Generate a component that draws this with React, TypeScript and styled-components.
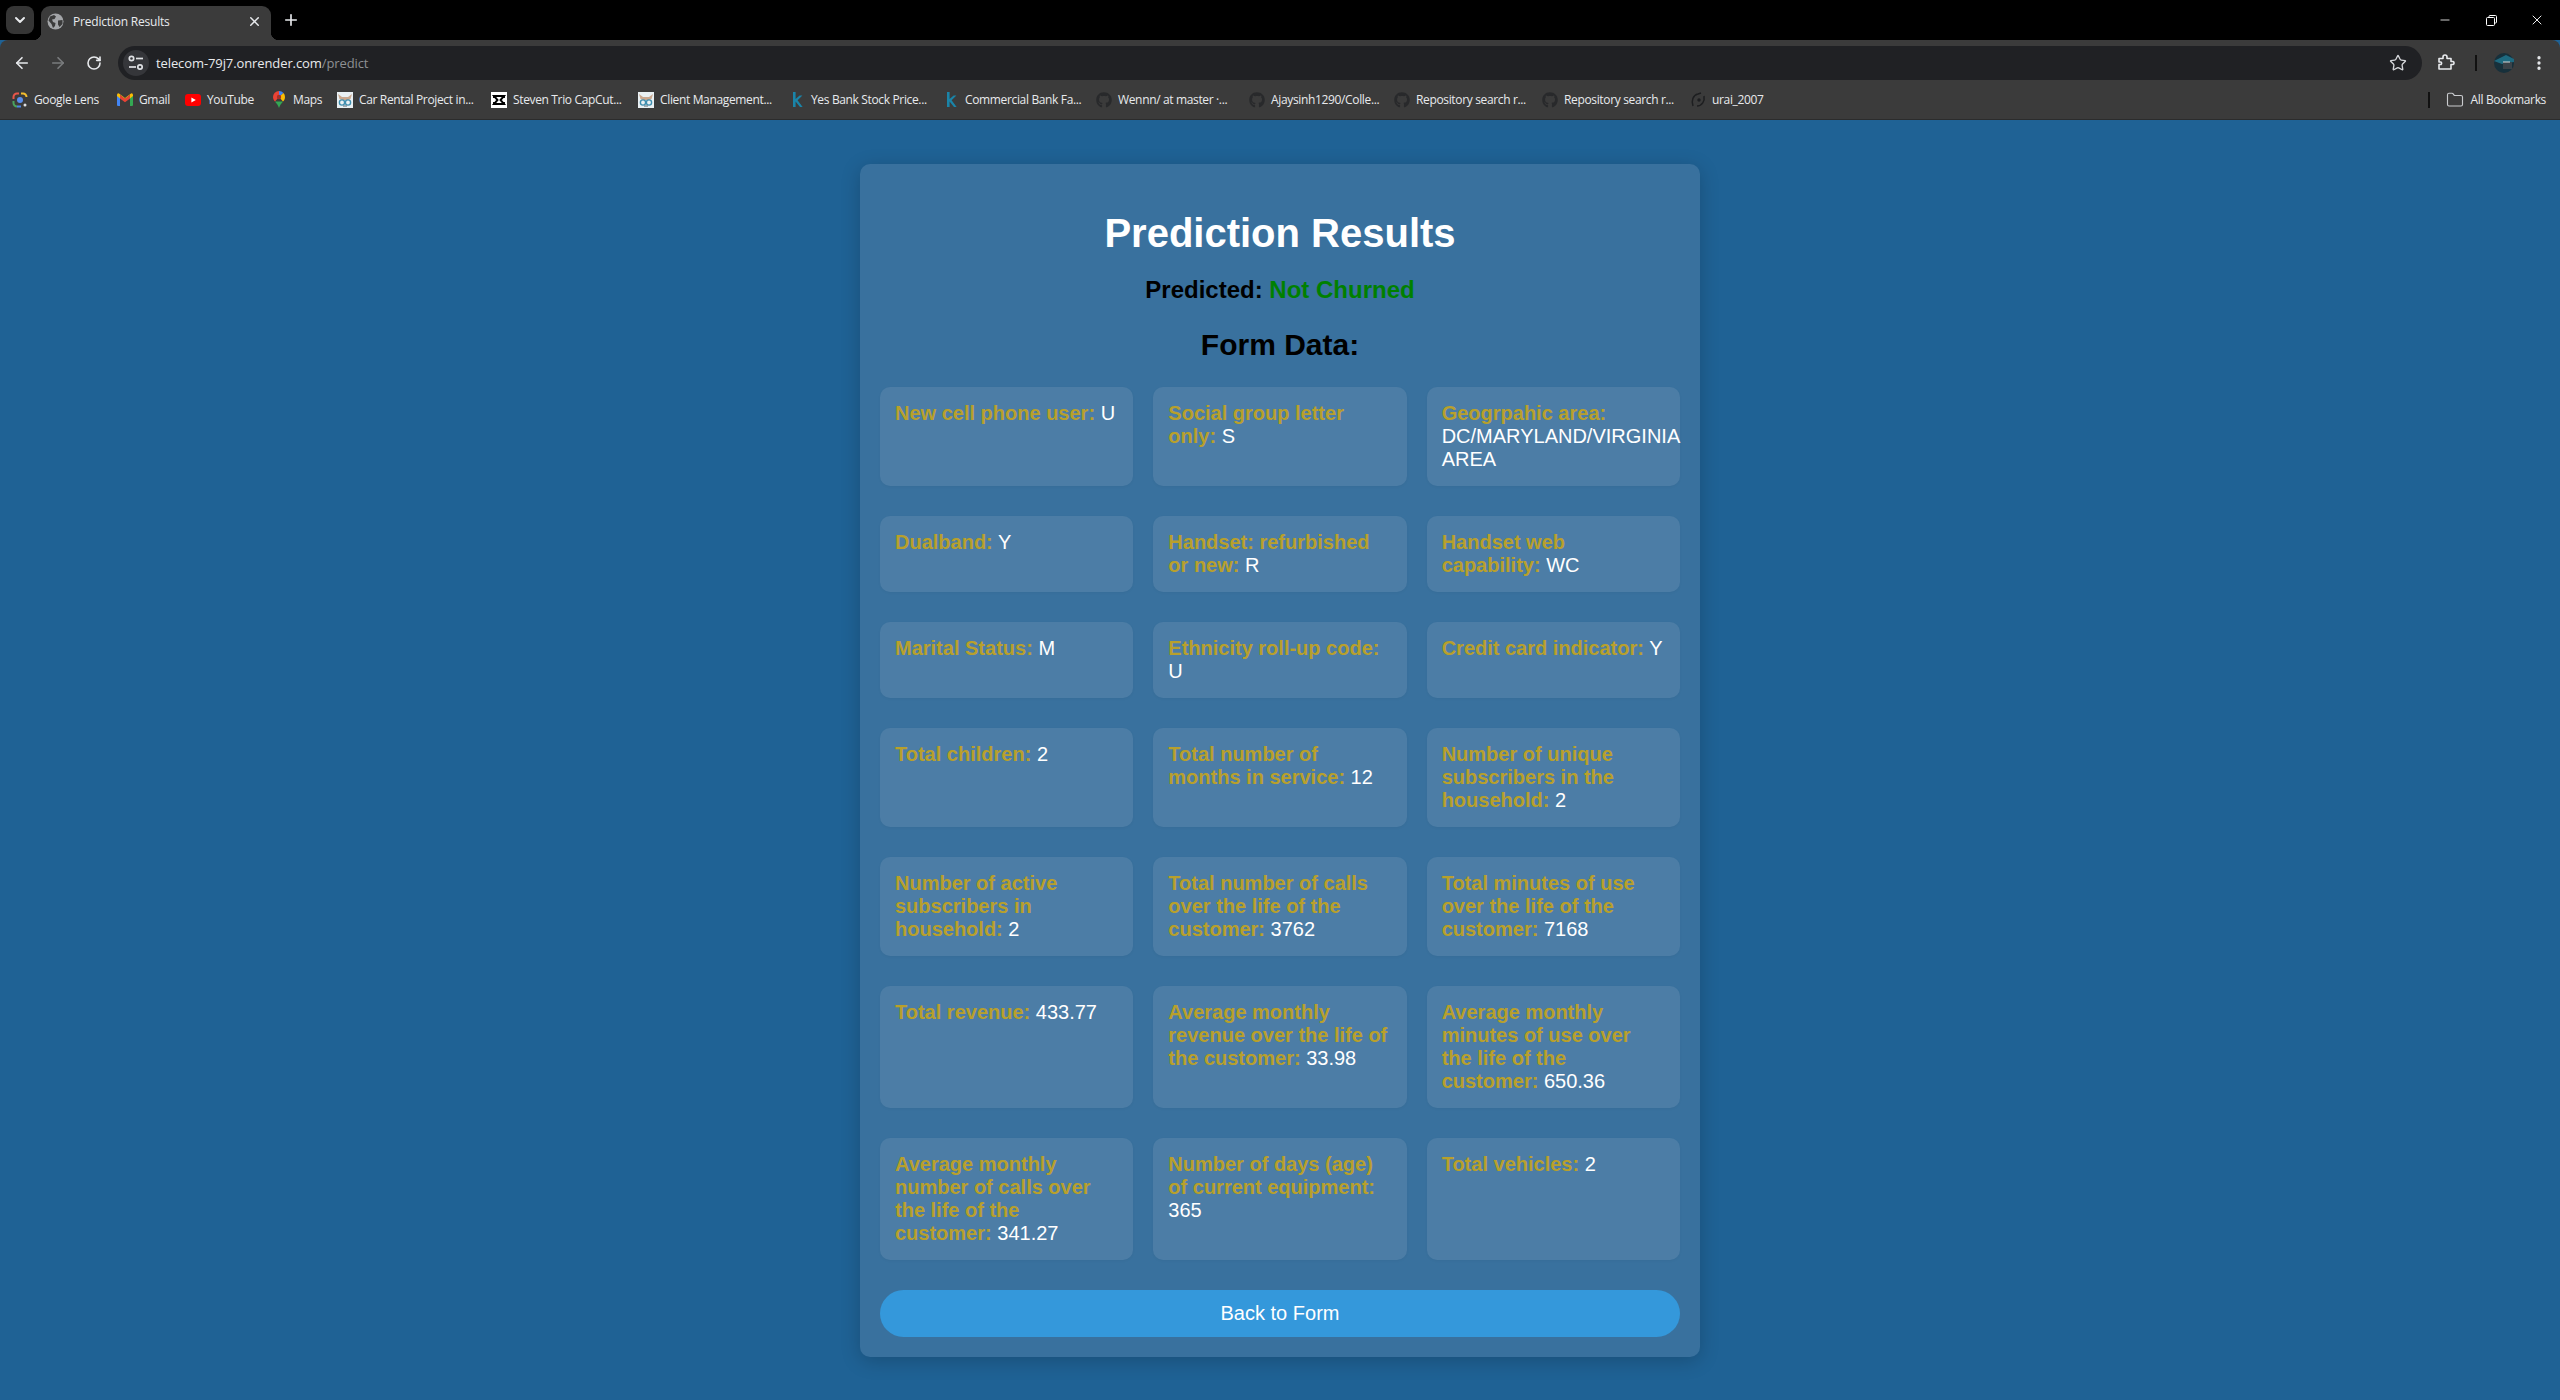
import styled, {createGlobalStyle} from "styled-components";
import {ArrowLeft, ArrowRight, ChevronDown, EllipsisVertical, Folder, Minus, Plus, RotateCw, Star, X} from "lucide-react";
import {FaGithub} from "react-icons/fa";
import type {ReactNode} from "react";

const GlobalStyle = createGlobalStyle`
    html, body {
        margin: 0;
        padding: 0;
        height: 100%;
        overflow: hidden;
        background: #1f6295;
    }
    * {
        box-sizing: border-box;
    }
`

const uiFont = `"Open Sans", "Noto Sans", sans-serif`
const pageFont = `"Liberation Sans", Arial, sans-serif`

type FormItem = { label: string, value: string }

const formRows: FormItem[][] = [
    [
        {label: "New cell phone user:", value: "U"},
        {label: "Social group letter only:", value: "S"},
        {label: "Geogrpahic area:", value: "DC/MARYLAND/VIRGINIA AREA"},
    ],
    [
        {label: "Dualband:", value: "Y"},
        {label: "Handset: refurbished or new:", value: "R"},
        {label: "Handset web capability:", value: "WC"},
    ],
    [
        {label: "Marital Status:", value: "M"},
        {label: "Ethnicity roll-up code:", value: "U"},
        {label: "Credit card indicator:", value: "Y"},
    ],
    [
        {label: "Total children:", value: "2"},
        {label: "Total number of months in service:", value: "12"},
        {label: "Number of unique subscribers in the household:", value: "2"},
    ],
    [
        {label: "Number of active subscribers in household:", value: "2"},
        {label: "Total number of calls over the life of the customer:", value: "3762"},
        {label: "Total minutes of use over the life of the customer:", value: "7168"},
    ],
    [
        {label: "Total revenue:", value: "433.77"},
        {label: "Average monthly revenue over the life of the customer:", value: "33.98"},
        {label: "Average monthly minutes of use over the life of the customer:", value: "650.36"},
    ],
    [
        {label: "Average monthly number of calls over the life of the customer:", value: "341.27"},
        {label: "Number of days (age) of current equipment:", value: "365"},
        {label: "Total vehicles:", value: "2"},
    ],
]

const GlobeIcon = () => <svg width="17" height="17" viewBox="0 0 17 17">
    <circle cx="8.5" cy="8.5" r="8" fill="#a3a5a8"/>
    <path d="M3 3.5 L7 2 L9 3.5 L7.5 6 L5 6.5 L6 9 L8.5 10 L8 13 L6 15 L4.5 11 L1.5 7.5 Z M11 7.5 L15.5 7 L15.5 11 L12.5 14 L11 11.5 Z" fill="#3b3b3b"/>
</svg>

const TuneIcon = () => <svg width="18" height="18" viewBox="0 0 18 18" fill="none" stroke="#dfe1e4" strokeWidth="1.7">
    <circle cx="4.5" cy="4.5" r="2.2"/>
    <path d="M9 4.5 H16"/>
    <path d="M2 13 H9"/>
    <circle cx="13" cy="13" r="2.2"/>
</svg>

const LensIcon = () => <svg width="16" height="16" viewBox="0 0 16 16" fill="none" strokeWidth="2">
    <path d="M1.5 7 V5 A3.5 3.5 0 0 1 5 1.5 H7" stroke="#e8564a"/>
    <path d="M9 1.5 H11 A3.5 3.5 0 0 1 14.5 5" stroke="#f3bd2e"/>
    <path d="M1.5 9 V11 A3.5 3.5 0 0 0 5 14.5" stroke="#4aa35e"/>
    <path d="M5 14.5 H9" stroke="#4a86e8"/>
    <circle cx="8" cy="8" r="3" fill="#5a8fee" stroke="none"/>
    <circle cx="13" cy="13" r="1.5" fill="#dfe1e4" stroke="none"/>
</svg>

const GmailIcon = () => <svg width="16" height="13" viewBox="0 0 16 13">
    <path d="M0 2 L3 2 L3 13 L1 13 Q0 13 0 12 Z" fill="#4285f4"/>
    <path d="M13 2 L16 2 L16 12 Q16 13 15 13 L13 13 Z" fill="#34a853"/>
    <path d="M0 2 Q0 0 2 0.4 L8 5 L14 0.4 Q16 0 16 2 L16 3 L13 5.4 L13 2 L8 6 L3 2 L3 5.4 L0 3 Z" fill="#fbbc04"/>
    <path d="M3 2 L8 6 L13 2 L13 5.6 L8 9.2 L3 5.6 Z" fill="#ea4335"/>
</svg>

const YouTubeIcon = () => <svg width="16" height="12" viewBox="0 0 16 12">
    <rect width="16" height="12" rx="3" fill="#f00"/>
    <path d="M6.4 3.4 L10.8 6 L6.4 8.6 Z" fill="#fff"/>
</svg>

const MapsIcon = () => <svg width="12" height="17" viewBox="0 0 12 17">
    <path d="M6 0 A6 6 0 0 0 0 6 C0 8 1 9.5 2 10.6 L6 6 Z" fill="#ea4335"/>
    <path d="M6 0 A6 6 0 0 1 10.5 2 L6 6 Z" fill="#4285f4"/>
    <path d="M10.5 2 A6 6 0 0 1 12 6 C12 8 11 9.5 10 10.6 L6 6 Z" fill="#fbbc04"/>
    <path d="M2 10.6 L10 10.6 C8.5 12.6 7 14 6 17 C5 14 3.5 12.6 2 10.6 Z" fill="#34a853"/>
    <circle cx="6" cy="6" r="2.2" fill="#a3302a"/>
</svg>

const BullIcon = () => <svg width="16" height="16" viewBox="0 0 16 16">
    <rect width="16" height="16" fill="#e9f0f3"/>
    <path d="M1 2 L5 5 L11 5 L15 2 L13.5 7 L11 8 L5 8 L2.5 7 Z" fill="#c9a88f"/>
    <circle cx="5" cy="10.5" r="2.6" fill="none" stroke="#3f8fb0" strokeWidth="1.4"/>
    <circle cx="11" cy="10.5" r="2.6" fill="none" stroke="#3f8fb0" strokeWidth="1.4"/>
    <path d="M6 14 H10" stroke="#6b7f8a" strokeWidth="1.2"/>
</svg>

const CapcutIcon = () => <svg width="16" height="16" viewBox="0 0 16 16">
    <rect width="16" height="16" fill="#fff"/>
    <path d="M3 4 H13 L9.5 8 L13 12 H3 L6.5 8 Z" fill="none" stroke="#000" strokeWidth="1.9"/>
    <path d="M3 4 V6 M13 4 V6 M3 12 V10 M13 12 V10" stroke="#000" strokeWidth="1.9"/>
</svg>

const KaggleIcon = () => <svg width="16" height="17" viewBox="0 0 16 17">
    <path d="M4 1 H6.6 V8 L10.6 4.4 H13.4 L8.6 9.2 L13.6 16 H11 L6.6 10.4 V16 H4 Z" fill="#1a84a8"/>
</svg>

const GithubIcon = () => <FaGithub size={16} color="#28292b"/>

const SpiralIcon = () => <svg width="16" height="16" viewBox="0 0 16 16" fill="none" stroke="#1d1e20" strokeWidth="1.5">
    <path d="M3 14 C1 9 3 3 8 2 L11 1"/>
    <path d="M14 4 C15 9 12 14 7 14"/>
    <circle cx="9" cy="8" r="1" fill="#1d1e20"/>
</svg>

const ExtensionIcon = () => <svg width="17" height="18" viewBox="0 0 17 18" fill="none" stroke="#e8eaed" strokeWidth="1.6" strokeLinejoin="round">
    <path d="M1 4.5 H5 V3 A2 2 0 0 1 9 3 V4.5 H13 V7.5 H15 A1.6 1.6 0 0 1 15 10.5 H13 V15 H1 V10.5 H3 A1.6 1.6 0 0 0 3 8 H1 Z"/>
</svg>

const AvatarIcon = () => <svg width="20" height="20" viewBox="0 0 20 20">
    <circle cx="10" cy="10" r="10" fill="#17303b"/>
    <path d="M0 8 L12 2 L20 6 L20 9 L8 11 Z" fill="#1e6a80"/>
    <rect x="9" y="9" width="9" height="7" fill="#3a4248"/>
    <path d="M9 9 H16" stroke="#d5d8da" strokeWidth="1"/>
</svg>

const RestoreIcon = () => <svg width="11" height="11" viewBox="0 0 11 11" fill="none" stroke="#ffffff" strokeWidth="1">
    <rect x="0.5" y="2.5" width="8" height="8" rx="1"/>
    <path d="M3 2.5 V1.5 A1 1 0 0 1 4 0.5 H9.5 A1 1 0 0 1 10.5 1.5 V7 A1 1 0 0 1 9.5 8 H8.5"/>
</svg>

type BookmarkDef = { icon: ReactNode, title: string, width: number }

const bookmarks: BookmarkDef[] = [
    {icon: <LensIcon/>, title: "Google Lens", width: 105},
    {icon: <GmailIcon/>, title: "Gmail", width: 68},
    {icon: <YouTubeIcon/>, title: "YouTube", width: 86},
    {icon: <MapsIcon/>, title: "Maps", width: 66},
    {icon: <BullIcon/>, title: "Car Rental Project in...", width: 154},
    {icon: <CapcutIcon/>, title: "Steven Trio CapCut...", width: 147},
    {icon: <BullIcon/>, title: "Client Management...", width: 151},
    {icon: <KaggleIcon/>, title: "Yes Bank Stock Price...", width: 154},
    {icon: <KaggleIcon/>, title: "Commercial Bank Fa...", width: 153},
    {icon: <GithubIcon/>, title: "Wennn/ at master ·...", width: 153},
    {icon: <GithubIcon/>, title: "Ajaysinh1290/Colle...", width: 145},
    {icon: <GithubIcon/>, title: "Repository search r...", width: 148},
    {icon: <GithubIcon/>, title: "Repository search r...", width: 148},
    {icon: <SpiralIcon/>, title: "urai_2007", width: 90},
]

const App = () => {
    return <Screen>
        <GlobalStyle/>
        <TabStrip>
            <TabSearch><ChevronDown size={16} strokeWidth={3} color="#e8eaed"/></TabSearch>
            <Tab>
                <GlobeIcon/>
                <TabTitle>Prediction Results</TabTitle>
                <TabClose><X size={15} strokeWidth={2.4} color="#e8eaed"/></TabClose>
            </Tab>
            <NewTab><Plus size={18} strokeWidth={2.2} color="#e8eaed"/></NewTab>
            <WindowControls>
                <WindowButton><Minus size={14} strokeWidth={1.4} color="#ffffff"/></WindowButton>
                <WindowButton><RestoreIcon/></WindowButton>
                <WindowButton><X size={16} strokeWidth={1.4} color="#ffffff"/></WindowButton>
            </WindowControls>
        </TabStrip>
        <Toolbar>
            <NavButton><ArrowLeft size={18} strokeWidth={2.2} color="#e8eaed"/></NavButton>
            <NavButton><ArrowRight size={18} strokeWidth={2.2} color="#7a7c7e"/></NavButton>
            <NavButton><RotateCw size={16} strokeWidth={2.4} color="#e8eaed"/></NavButton>
            <AddressBar>
                <SiteInfo><TuneIcon/></SiteInfo>
                <UrlText>telecom-79j7.onrender.com<UrlPath>/predict</UrlPath></UrlText>
                <Star size={18} strokeWidth={1.8} color="#d5d7da"/>
            </AddressBar>
            <ToolbarEnd>
                <ExtensionIcon/>
                <ToolbarDivider/>
                <AvatarIcon/>
                <EllipsisVertical size={18} strokeWidth={2.4} color="#e8eaed"/>
            </ToolbarEnd>
        </Toolbar>
        <BookmarksBar>
            {bookmarks.map((bookmark, index) =>
                <Bookmark key={index} $width={bookmark.width}>
                    <BookmarkIcon>{bookmark.icon}</BookmarkIcon>
                    <BookmarkTitle>{bookmark.title}</BookmarkTitle>
                </Bookmark>
            )}
            <AllBookmarks>
                <BarDivider/>
                <Folder size={18} strokeWidth={1.5} color="#c9cbce"/>
                <BookmarkTitle>All Bookmarks</BookmarkTitle>
            </AllBookmarks>
        </BookmarksBar>
        <Page>
            <Container>
                <Title>Prediction Results</Title>
                <Predicted>Predicted: <NotChurned>Not Churned</NotChurned></Predicted>
                <SubTitle>Form Data:</SubTitle>
                <FormGrid>
                    {formRows.flat().map(item =>
                        <FormCell key={item.label}>
                            <CellLabel>{item.label}</CellLabel> {item.value}
                        </FormCell>
                    )}
                </FormGrid>
                <BackButton>Back to Form</BackButton>
            </Container>
        </Page>
    </Screen>
}

const Screen = styled.div`
    width: 2560px;
    height: 1400px;
    display: flex;
    flex-direction: column;
    overflow: hidden;
`

const TabStrip = styled.div`
    height: 40px;
    flex-shrink: 0;
    background: #000;
    display: flex;
    align-items: flex-end;
    padding-left: 6px;
`

const TabSearch = styled.div`
    width: 28px;
    height: 28px;
    margin-bottom: 6px;
    border-radius: 8px;
    background: #353535;
    display: flex;
    align-items: center;
    justify-content: center;
`

const Tab = styled.div`
    position: relative;
    width: 230px;
    height: 34px;
    margin-left: 7px;
    padding: 0 9px 4px 6px;
    border-radius: 9px 9px 0 0;
    background: #3b3b3b;
    display: flex;
    align-items: center;
    gap: 9px;

    &::before, &::after {
        content: "";
        position: absolute;
        bottom: 0;
        width: 8px;
        height: 8px;
    }
    &::before {
        left: -8px;
        background: radial-gradient(circle at 0 0, #000 8px, #3b3b3b 8.5px);
    }
    &::after {
        right: -8px;
        background: radial-gradient(circle at 100% 0, #000 8px, #3b3b3b 8.5px);
    }
`

const TabTitle = styled.span`
    flex: 1;
    font: 12px ${uiFont};
    color: #e8eaed;
    letter-spacing: -0.2px;
`

const TabClose = styled.span`
    display: flex;
`

const NewTab = styled.div`
    width: 28px;
    height: 28px;
    margin: 0 0 6px 6px;
    display: flex;
    align-items: center;
    justify-content: center;
`

const WindowControls = styled.div`
    margin-left: auto;
    height: 40px;
    display: flex;
    align-items: center;
`

const WindowButton = styled.div`
    width: 46px;
    height: 40px;
    display: flex;
    align-items: center;
    justify-content: center;
`

const Toolbar = styled.div`
    height: 40px;
    flex-shrink: 0;
    background: #3b3b3b;
    border-radius: 8px 8px 0 0;
    display: flex;
    align-items: center;
    padding: 6px 12px 0 4px;
`

const NavButton = styled.div`
    width: 36px;
    height: 34px;
    display: flex;
    align-items: center;
    justify-content: center;
`

const AddressBar = styled.div`
    width: 2304px;
    height: 34px;
    margin-left: 6px;
    border-radius: 17px;
    background: #202124;
    display: flex;
    align-items: center;
    padding: 0 15px 0 5px;
`

const SiteInfo = styled.div`
    width: 26px;
    height: 26px;
    border-radius: 13px;
    background: #35363a;
    display: flex;
    align-items: center;
    justify-content: center;
`

const UrlText = styled.span`
    flex: 1;
    margin-left: 7px;
    font: 13px ${uiFont};
    color: #e8eaed;
    letter-spacing: -0.1px;
`

const UrlPath = styled.span`
    color: #8e9093;
`

const ToolbarEnd = styled.div`
    flex: 1;
    display: flex;
    align-items: center;
    justify-content: space-between;
    padding-left: 16px;
`

const ToolbarDivider = styled.div`
    width: 2px;
    height: 16px;
    background: #111;
    margin: 0 0 0 4px;
`

const BookmarksBar = styled.div`
    height: 40px;
    flex-shrink: 0;
    background: #3b3b3b;
    display: flex;
    align-items: center;
    padding-left: 12px;
    border-bottom: 1px solid #2c2c2c;
`

const Bookmark = styled.div<{ $width: number }>`
    width: ${props => props.$width}px;
    flex-shrink: 0;
    display: flex;
    align-items: center;
    gap: 6px;
    white-space: nowrap;
    overflow: hidden;
`

const BookmarkIcon = styled.span`
    width: 16px;
    display: flex;
    align-items: center;
    justify-content: center;
`

const BookmarkTitle = styled.span`
    font: 12px ${uiFont};
    color: #e8eaed;
    letter-spacing: -0.35px;
`

const AllBookmarks = styled.div`
    margin-left: auto;
    padding-right: 14px;
    display: flex;
    align-items: center;
    gap: 7px;
`

const BarDivider = styled.div`
    width: 2px;
    height: 16px;
    background: #111;
    margin-right: 9px;
`

const Page = styled.main`
    flex: 1;
    background: #1f6295;
    padding-top: 44px;
    display: flex;
    justify-content: center;
    align-items: flex-start;
    font-family: ${pageFont};
`

const Container = styled.div`
    width: 840px;
    padding: 20px;
    border-radius: 10px;
    background: #39719e;
    box-shadow: 0 4px 20px rgba(0, 0, 0, 0.2);
    display: flex;
    flex-direction: column;
`

const Title = styled.h1`
    margin: 27px 0 20px;
    font-size: 40px;
    font-weight: bold;
    color: #fff;
    text-align: center;
`

const Predicted = styled.p`
    margin: 0 0 24px;
    font-size: 24px;
    font-weight: bold;
    color: #000;
    text-align: center;
`

const NotChurned = styled.span`
    color: #008000;
`

const SubTitle = styled.h2`
    margin: 0 0 25px;
    font-size: 30px;
    font-weight: bold;
    color: #000;
    text-align: center;
`

const FormGrid = styled.div`
    display: grid;
    grid-template-columns: repeat(3, 1fr);
    column-gap: 20px;
    row-gap: 30px;
`

const FormCell = styled.div`
    min-width: 0;
    padding: 15px;
    border-radius: 10px;
    background: #4c7da6;
    box-shadow: 0 1px 3px rgba(0, 0, 0, 0.04);
    font-size: 20px;
    color: #fff;
`

const CellLabel = styled.strong`
    color: #b8a02c;
`

const BackButton = styled.button`
    margin-top: 30px;
    height: 47px;
    border: none;
    border-radius: 25px;
    background: #3498db;
    color: #fff;
    font-family: ${pageFont};
    font-size: 20px;
`

export default App
